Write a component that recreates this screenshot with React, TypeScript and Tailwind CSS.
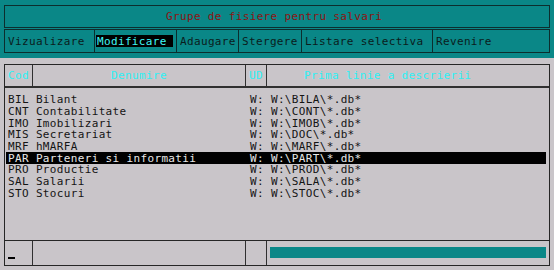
import React from "react";

const rows = [
  ["BIL Bilant", "W: W:\\BILA\\*.db*"],
  ["CNT Contabilitate", "W: W:\\CONT\\*.db*"],
  ["IMO Imobilizari", "W: W:\\IMOB\\*.db*"],
  ["MIS Secretariat", "W: W:\\DOC\\*.db*"],
  ["MRF hMARFA", "W: W:\\MARF\\*.db*"],
  ["PAR Parteneri si informatii", "W: W:\\PART\\*.db*"],
  ["PRO Productie", "W: W:\\PROD\\*.db*"],
  ["SAL Salarii", "W: W:\\SALA\\*.db*"],
  ["STO Stocuri", "W: W:\\STOC\\*.db*"],
];

const menu: [string, string][] = [
  ["Vizualizare", "w-[90px]"],
  ["Modificare", "w-[82px]"],
  ["Adaugare", "w-[62px]"],
  ["Stergere", "w-[63px]"],
  ["Listare selectiva", "w-[131px]"],
  ["Revenire", "flex-1"],
];

export default function App() {
  return (
    <div
      className="w-[554px] h-[270px] flex flex-col overflow-hidden text-[11px] tracking-[0.35px] leading-none"
      style={{ fontFamily: '"DejaVu Sans Mono", "Liberation Mono", monospace' }}
    >
      <div className="h-[58px] bg-[#0a8787] pt-[5px] px-[4px] flex flex-col">
        <div className="h-[23px] border border-[#0c2e2e] flex items-center pl-[161px] text-[#8c1414]">
          Grupe de fisiere pentru salvari
        </div>
        <div className="h-[24px] mt-[1px] border border-[#0c2e2e] flex">
          {menu.map(([label, w], i) => (
            <div
              key={label}
              className={`${w} h-full flex items-center ${
                i < menu.length - 1 ? "border-r border-[#0c2e2e]" : ""
              } ${i === 1 ? "pl-[1px]" : "pl-[3px]"} text-[#0a1c1c]`}
            >
              {i === 1 ? (
                <span className="bg-black text-[#3ff6f6] h-[12px] w-[77px] flex items-center pl-[1px]">
                  {label}
                </span>
              ) : (
                label
              )}
            </div>
          ))}
        </div>
      </div>
      <div className="flex-1 bg-[#c9c5c9] pt-[6px] px-[4px] pb-[4px]">
        <div className="h-[202px] border border-[#262626] flex flex-col">
          <div className="h-[23px] border-b-2 border-[#303030] flex text-[#2ef0f4]">
            <div className="w-[28px] border-r border-[#303030] flex items-center pl-[3px]">Cod</div>
            <div className="w-[213px] border-r border-[#303030] flex items-center justify-center">
              Denumire
            </div>
            <div className="w-[21px] border-r border-[#303030] flex items-center pl-[3px]">UD</div>
            <div className="flex-1 flex items-center pl-[37px]">Prima linie a descrierii</div>
          </div>
          <div className="flex-1 pt-[6px] flex flex-col">
            {rows.map(([a, b]) => {
              const sel = a.startsWith("PAR");
              return (
                <div
                  key={a}
                  className={`h-[11.7px] ml-[1px] mr-[3px] pl-[2px] flex items-center whitespace-pre ${
                    sel ? "bg-black text-[#e8e8e8]" : "text-[#141414]"
                  }`}
                >
                  <span className="w-[242px]">{a}</span>
                  <span>{b}</span>
                </div>
              );
            })}
          </div>
          <div className="h-[25px] border-t border-[#262626] flex">
            <div className="w-[28px] border-r border-[#303030] relative">
              <div className="absolute left-[3px] top-[16px] w-[7px] h-[2px] bg-black" />
            </div>
            <div className="w-[213px] border-r border-[#303030]" />
            <div className="w-[21px] border-r border-[#303030]" />
            <div className="flex-1 pl-[3px] pr-[3px] pt-[6px]">
              <div className="h-[11px] bg-[#0a8787]" />
            </div>
          </div>
        </div>
      </div>
    </div>
  );
}
